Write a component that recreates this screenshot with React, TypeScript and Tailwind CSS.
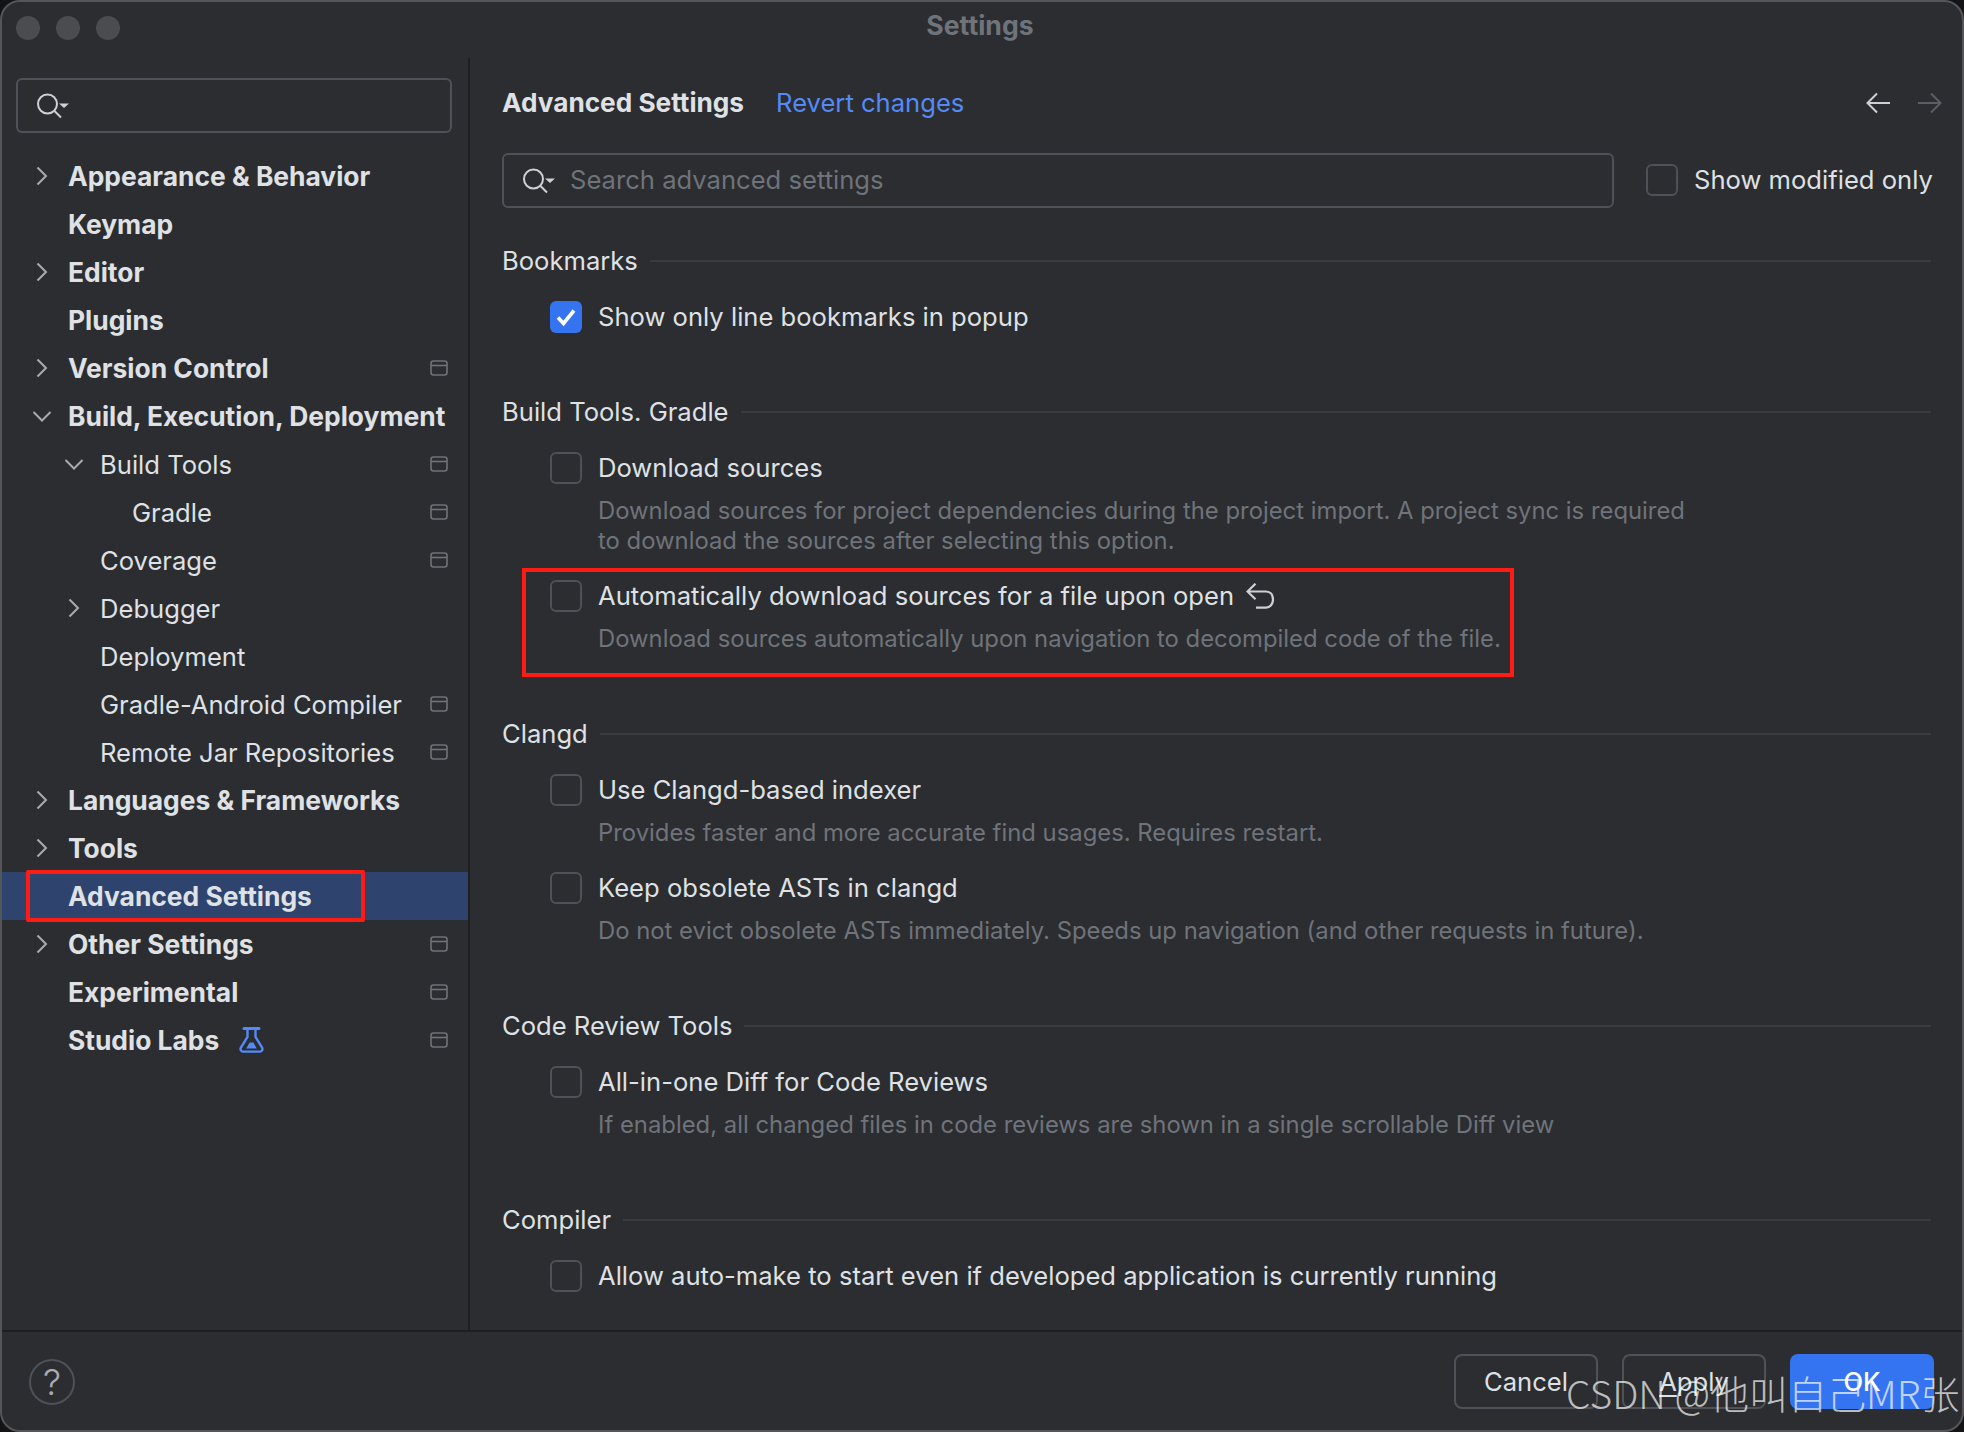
import type { ReactNode } from 'react'

type NavItem = {
  label: string
  level: 0 | 1 | 2
  arrow?: 'right' | 'down'
  bold?: boolean
  project?: boolean
  selected?: boolean
  flask?: boolean
}

const navItems: NavItem[] = [
  { label: 'Appearance & Behavior', level: 0, arrow: 'right', bold: true },
  { label: 'Keymap', level: 0, bold: true },
  { label: 'Editor', level: 0, arrow: 'right', bold: true },
  { label: 'Plugins', level: 0, bold: true },
  { label: 'Version Control', level: 0, arrow: 'right', bold: true, project: true },
  { label: 'Build, Execution, Deployment', level: 0, arrow: 'down', bold: true },
  { label: 'Build Tools', level: 1, arrow: 'down', project: true },
  { label: 'Gradle', level: 2, project: true },
  { label: 'Coverage', level: 1, project: true },
  { label: 'Debugger', level: 1, arrow: 'right' },
  { label: 'Deployment', level: 1 },
  { label: 'Gradle-Android Compiler', level: 1, project: true },
  { label: 'Remote Jar Repositories', level: 1, project: true },
  { label: 'Languages & Frameworks', level: 0, arrow: 'right', bold: true },
  { label: 'Tools', level: 0, arrow: 'right', bold: true },
  { label: 'Advanced Settings', level: 0, bold: true, selected: true },
  { label: 'Other Settings', level: 0, arrow: 'right', bold: true, project: true },
  { label: 'Experimental', level: 0, bold: true, project: true },
  { label: 'Studio Labs', level: 0, bold: true, project: true, flask: true },
]

const levelPadding = { 0: 'pl-[30px]', 1: 'pl-[62px]', 2: 'pl-[94px]' }

function SearchIcon() {
  return (
    <svg width="34" height="28" viewBox="0 0 34 28" fill="none" className="shrink-0">
      <circle cx="11.5" cy="12" r="9.5" stroke="#ced0d6" strokeWidth="2" />
      <path d="M18.5 19L25 25.5" stroke="#ced0d6" strokeWidth="2" />
      <path d="M23 11.5H33L28 16Z" fill="#ced0d6" />
    </svg>
  )
}

function Arrow({ dir }: { dir: 'right' | 'down' }) {
  return (
    <svg width="20" height="20" viewBox="0 0 20 20" fill="none">
      {dir === 'right' ? (
        <path d="M5.5 1.5L14 10L5.5 18.5" stroke="#a8abb0" strokeWidth="2" />
      ) : (
        <path d="M1.5 6L10 14.5L18.5 6" stroke="#a8abb0" strokeWidth="2" />
      )}
    </svg>
  )
}

function ProjectIcon() {
  return (
    <svg width="18" height="16" viewBox="0 0 18 16" fill="none" className="shrink-0">
      <rect x="1" y="1" width="16" height="14" rx="2.5" stroke="#6f737a" strokeWidth="1.6" />
      <path d="M1 5.5H17" stroke="#6f737a" strokeWidth="1.6" />
    </svg>
  )
}

function FlaskIcon() {
  return (
    <svg width="25" height="26" viewBox="0 0 25 26" fill="none" className="ml-[20px] shrink-0">
      <path d="M5 1.6H20" stroke="#548af7" strokeWidth="3" strokeLinecap="round" />
      <path
        d="M8.5 2V10L1.9 20.6C0.9 22.4 2 24.6 4 24.6H21C23 24.6 24.1 22.4 23.1 20.6L16.5 10V2"
        stroke="#548af7"
        strokeWidth="2.4"
      />
      <path d="M7.2 21.5L10.6 15.5H14.4L17.8 21.5Z" fill="#548af7" />
    </svg>
  )
}

function Checkbox({ checked }: { checked?: boolean }) {
  if (checked) {
    return (
      <div className="flex h-8 w-8 shrink-0 items-center justify-center rounded-[6px] bg-[#3574f0]">
        <svg width="22" height="20" viewBox="0 0 22 20" fill="none">
          <path d="M3 10.5L8.5 16.5L19 3.5" stroke="white" strokeWidth="3.6" />
        </svg>
      </div>
    )
  }
  return <div className="h-8 w-8 shrink-0 rounded-[6px] border-2 border-[#4e5157]" />
}

function Option({ label, desc, children }: { label: string; desc?: string[]; children?: ReactNode }) {
  return (
    <div className="pl-[48px]">
      <div className="flex h-8 items-center gap-4">
        <Checkbox checked={label.startsWith('Show only')} />
        <span>{label}</span>
        {children}
      </div>
      {desc && (
        <div className="mt-3 pl-[48px] text-[23.85px] leading-[30px] text-[#6f737a]">
          {desc.map((line) => (
            <div key={line}>{line}</div>
          ))}
        </div>
      )}
    </div>
  )
}

function Section({ title, top = 'mt-[64px]', children }: { title: string; top?: string; children: ReactNode }) {
  return (
    <section className={top}>
      <div className="flex h-8 items-center gap-3">
        <span>{title}</span>
        <div className="h-[2px] flex-1 bg-[#393b40]" />
      </div>
      <div className="mt-6 flex flex-col gap-6">{children}</div>
    </section>
  )
}

function Sidebar() {
  return (
    <aside className="w-[468px] shrink-0 border-r-2 border-[#1e1f22]">
      <div className="ml-[14px] mt-[20px] flex h-[55px] w-[436px] items-center rounded-[6px] border-2 border-[#4e5157] pl-[18px]">
        <SearchIcon />
      </div>
      <nav className="mt-[19px]">
        {navItems.map((item) => (
          <div
            key={item.label}
            className={`flex h-12 items-center pr-[20px] ${levelPadding[item.level]} ${item.selected ? 'bg-[#2e436e]' : ''}`}
          >
            <div className="flex w-[36px] shrink-0 items-center">{item.arrow && <Arrow dir={item.arrow} />}</div>
            <span className={item.bold ? 'mt-[2px] text-[26.4px] font-bold' : 'mt-[2px]'}>{item.label}</span>
            {item.flask && <FlaskIcon />}
            <div className="flex-1" />
            {item.project && <ProjectIcon />}
          </div>
        ))}
      </nav>
    </aside>
  )
}

function Content() {
  return (
    <main className="min-w-0 flex-1 pl-[32px] pr-[31px] pt-[29px]">
      <div className="flex h-8 items-center">
        <span className="text-[26.2px] font-bold">Advanced Settings</span>
        <span className="ml-[32px] text-[#548af7]">Revert changes</span>
        <div className="flex-1" />
        <svg width="76" height="24" viewBox="0 0 76 24" fill="none" className="mr-[-11px]">
          <path d="M24 12H2M11 2.5L1.5 12L11 21.5" stroke="#ced0d6" strokeWidth="2" />
          <path d="M52 12H74M65 2.5L74.5 12L65 21.5" stroke="#5a5d63" strokeWidth="2" />
        </svg>
      </div>

      <div className="mt-[34px] flex items-center">
        <div className="flex h-[55px] w-[1112px] shrink-0 items-center rounded-[6px] border-2 border-[#4e5157] pl-[18px]">
          <SearchIcon />
          <span className="ml-[14px] text-[#6f737a]">Search advanced settings</span>
        </div>
        <div className="ml-[32px] flex items-center gap-4 whitespace-nowrap">
          <Checkbox />
          <span>Show modified only</span>
        </div>
      </div>

      <Section title="Bookmarks" top="mt-[37px]">
        <Option label="Show only line bookmarks in popup" />
      </Section>

      <Section title="Build Tools. Gradle" top="mt-[63px]">
        <Option
          label="Download sources"
          desc={[
            'Download sources for project dependencies during the project import. A project sync is required',
            'to download the sources after selecting this option.',
          ]}
        />
        <Option
          label="Automatically download sources for a file upon open"
          desc={['Download sources automatically upon navigation to decompiled code of the file.']}
        >
          <svg width="28" height="26" viewBox="0 0 28 26" fill="none" className="ml-[-4px]">
            <path d="M9.5 0.7L1.5 8.5L9.5 16.3M1.5 8.5H20C24.5 8.5 27 12 27 16.5C27 21 24 24.6 20 24.6H10" stroke="#ced0d6" strokeWidth="2.2" />
          </svg>
        </Option>
      </Section>

      <Section title="Clangd">
        <Option label="Use Clangd-based indexer" desc={['Provides faster and more accurate find usages. Requires restart.']} />
        <Option
          label="Keep obsolete ASTs in clangd"
          desc={['Do not evict obsolete ASTs immediately. Speeds up navigation (and other requests in future).']}
        />
      </Section>

      <Section title="Code Review Tools">
        <Option
          label="All-in-one Diff for Code Reviews"
          desc={['If enabled, all changed files in code reviews are shown in a single scrollable Diff view']}
        />
      </Section>

      <Section title="Compiler">
        <Option label="Allow auto-make to start even if developed application is currently running" />
      </Section>
    </main>
  )
}

export default function App() {
  return (
    <div className="relative h-[1432px] w-[1964px] overflow-hidden bg-[#141416] font-['Inter',sans-serif] text-[25.6px] text-[#dfe1e5]">
      <div className="flex h-full flex-col overflow-hidden rounded-[20px] border-2 border-[#55565a] bg-[#2b2d30]">
        {/* Title bar */}
        <div className="relative flex h-[56px] shrink-0 items-center justify-center pb-2 pr-[4px]">
          <div className="absolute left-[14px] top-[14px] flex gap-4">
            <div className="h-6 w-6 rounded-full bg-[#4b4c4f]" />
            <div className="h-6 w-6 rounded-full bg-[#4b4c4f]" />
            <div className="h-6 w-6 rounded-full bg-[#4b4c4f]" />
          </div>
          <span className="text-[26.6px] font-bold text-[#6f737a]">Settings</span>
        </div>

        <div className="flex min-h-0 flex-1">
          <Sidebar />
          <Content />
        </div>

        {/* Footer */}
        <div className="flex h-[100px] shrink-0 items-start border-t-2 border-[#1e1f22] pr-[28px] pt-[22px]">
          <div className="ml-[27px] mt-[5px] flex h-[46px] w-[46px] items-center justify-center rounded-full border-2 border-[#4e5157] text-[36px] font-light text-[#a8abb0]">
            ?
          </div>
          <div className="flex-1" />
          <div className="flex gap-6">
            <div className="flex h-[55px] w-[144px] items-center justify-center rounded-[8px] border-2 border-[#4e5157] pt-[2px]">Cancel</div>
            <div className="flex h-[55px] w-[144px] items-center justify-center rounded-[8px] border-2 border-[#4e5157] pt-[2px]">
              <span className="underline decoration-2 underline-offset-4">A</span>pply
            </div>
            <div className="flex h-[55px] w-[144px] items-center justify-center rounded-[8px] bg-[#3574f0] pt-[2px] font-medium text-white">OK</div>
          </div>
        </div>
      </div>

      {/* Annotations and watermark over the screenshot */}
      <div className="absolute left-[26px] top-[870px] h-[52px] w-[339px] rounded-[2px] border-[4px] border-[#ff1c14]" />
      <div className="absolute left-[522px] top-[568px] h-[109px] w-[992px] border-[4px] border-[#ff1c14]" />
      <div className="absolute left-[1566px] top-[1367px] whitespace-nowrap font-['Noto_Sans_CJK_SC',sans-serif] text-[39px] font-light leading-[50px] text-white/70">
        CSDN @他叫自己MR张
      </div>
    </div>
  )
}
